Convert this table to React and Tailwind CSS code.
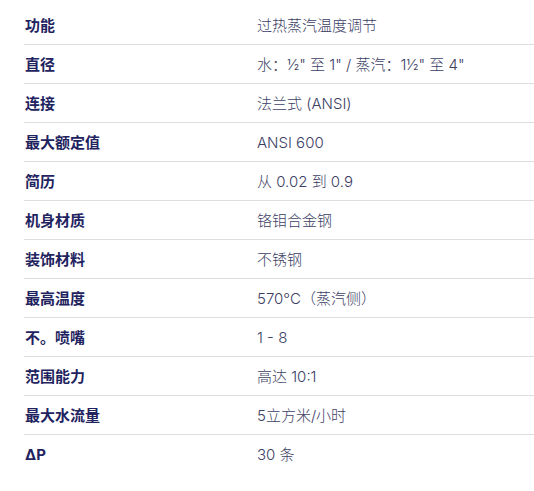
const rows = [
  ['功能', '过热蒸汽温度调节'],
  ['直径', '水：½" 至 1" / 蒸汽：1½" 至 4"'],
  ['连接', '法兰式 (ANSI)'],
  ['最大额定值', 'ANSI 600'],
  ['简历', '从 0.02 到 0.9'],
  ['机身材质', '铬钼合金钢'],
  ['装饰材料', '不锈钢'],
  ['最高温度', '570°C（蒸汽侧）'],
  ['不。喷嘴', '1 - 8'],
  ['范围能力', '高达 10:1'],
  ['最大水流量', '5立方米/小时'],
  ['ΔP', '30 条'],
];

export default function App() {
  return (
    <div
      className="min-h-screen bg-white pl-[24px] pt-[6px]"
      style={{ fontFamily: 'Inter, "Noto Sans CJK SC", sans-serif' }}
    >
      {/* Spec table */}
      <div className="flex flex-col">
        {rows.map(([label, value], i) => (
          <div
            key={label}
            className={`grid grid-cols-[233px_1fr] items-center h-[39px] pt-[2px] ${
              i < rows.length - 1 ? 'border-b border-[#dedede]' : ''
            }`}
          >
            <div className="pl-[1px] text-[15px] font-bold text-[#1f2460]">{label}</div>
            <div className="text-[15px] font-light text-[#3c4064]">{value}</div>
          </div>
        ))}
      </div>
    </div>
  );
}
